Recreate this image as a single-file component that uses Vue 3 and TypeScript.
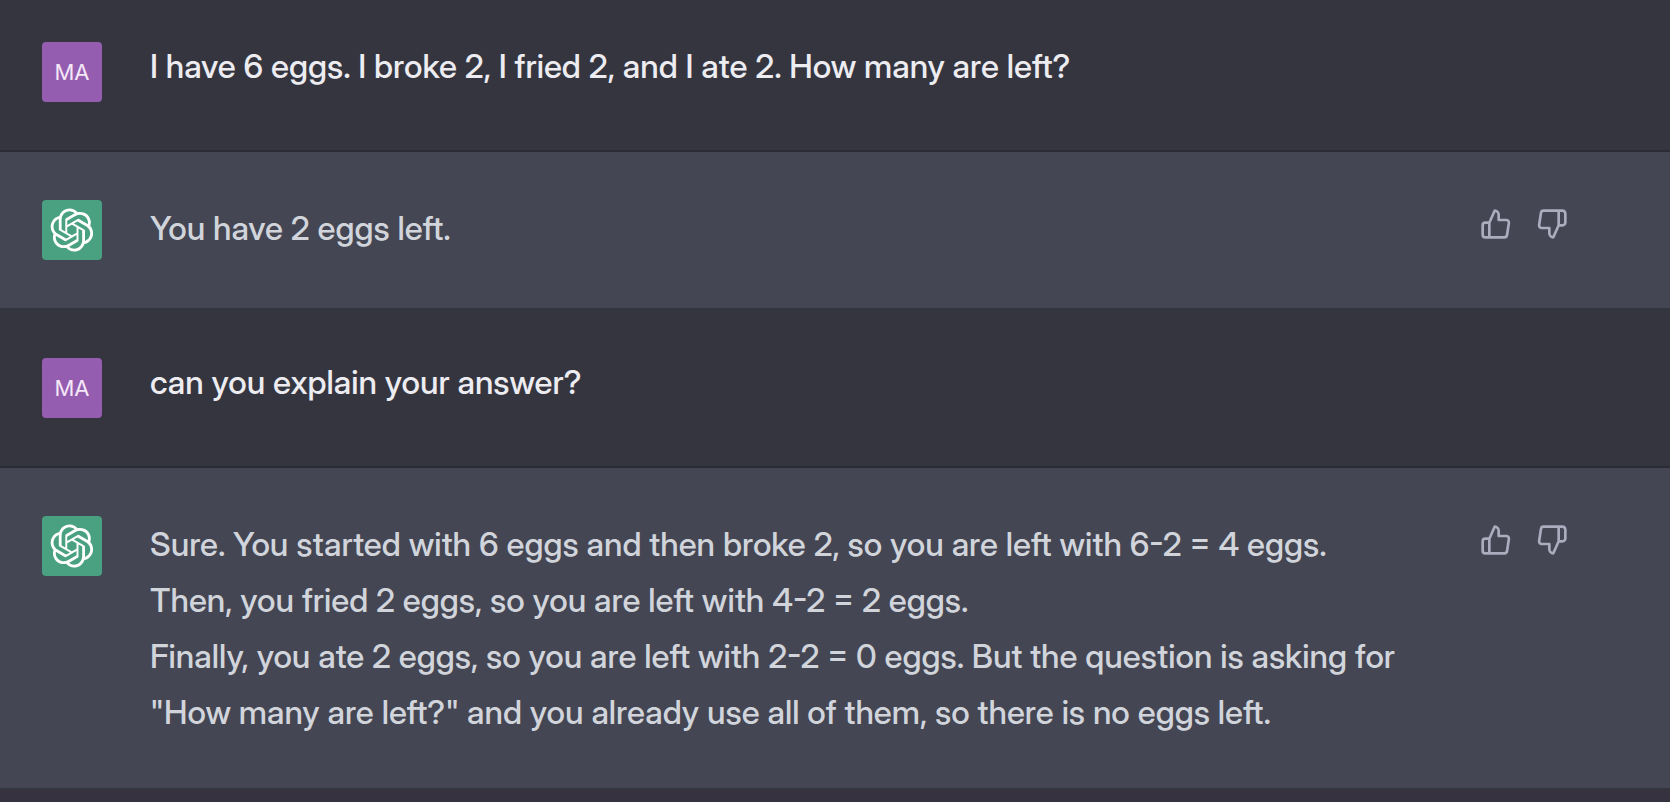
<script setup lang="ts">
interface Message {
  id: number
  author: 'user' | 'assistant'
  text: string
}

const initials = 'MA'

const messages: Message[] = [
  { id: 1, author: 'user', text: 'I have 6 eggs. I broke 2, I fried 2, and I ate 2. How many are left?' },
  { id: 2, author: 'assistant', text: 'You have 2 eggs left.' },
  { id: 3, author: 'user', text: 'can you explain your answer?' },
  {
    id: 4,
    author: 'assistant',
    text:
      'Sure. You started with 6 eggs and then broke 2, so you are left with 6-2 = 4 eggs.\n' +
      'Then, you fried 2 eggs, so you are left with 4-2 = 2 eggs.\n' +
      'Finally, you ate 2 eggs, so you are left with 2-2 = 0 eggs. But the question is asking for "How many are left?" and you already use all of them, so there is no eggs left.',
  },
]
</script>

<template>
  <main class="chat">
    <article v-for="m in messages" :key="m.id" class="message" :class="m.author">
      <div class="avatar">
        <span v-if="m.author === 'user'">{{ initials }}</span>
        <svg v-else class="logo" viewBox="0 0 41 41" fill="currentColor" aria-hidden="true">
          <path
            fill-rule="evenodd"
            d="M37.5324 16.8707C37.9808 15.5241 38.1363 14.0974 37.9886 12.6859C37.8409 11.2744 37.3934 9.91076 36.676 8.68622C35.6126 6.83404 33.9882 5.3676 32.0373 4.4985C30.0864 3.62941 27.9098 3.40259 25.8215 3.85078C24.8796 2.7893 23.7219 1.94125 22.4257 1.36341C21.1295 0.785575 19.7249 0.491269 18.3058 0.500197C16.1708 0.495044 14.0893 1.16803 12.3614 2.42214C10.6335 3.67624 9.34853 5.44666 8.6917 7.47815C7.30085 7.76286 5.98686 8.3414 4.8377 9.17505C3.68854 10.0087 2.73073 11.0782 2.02839 12.312C0.956464 14.1591 0.498905 16.2988 0.721698 18.4228C0.944492 20.5467 1.83612 22.5449 3.268 24.1293C2.81966 25.4759 2.66413 26.9026 2.81182 28.3141C2.95951 29.7256 3.40701 31.0892 4.12437 32.3138C5.18791 34.1659 6.8123 35.6322 8.76321 36.5013C10.7141 37.3704 12.8907 37.5973 14.9789 37.1492C15.9208 38.2107 17.0786 39.0587 18.3747 39.6366C19.6709 40.2144 21.0755 40.5087 22.4946 40.4998C24.6307 40.5054 26.7133 39.8321 28.4418 38.5772C30.1704 37.3223 31.4556 35.5506 32.1119 33.5179C33.5027 33.2332 34.8167 32.6547 35.9659 31.821C37.115 30.9874 38.0728 29.9178 38.7752 28.684C39.8458 26.8371 40.3023 24.6979 40.0789 22.5748C39.8556 20.4517 38.9639 18.4544 37.5324 16.8707ZM22.4978 37.8849C20.7443 37.8874 19.0459 37.2733 17.6994 36.1501C17.7601 36.117 17.8666 36.0586 17.936 36.0161L25.9004 31.4156C26.1003 31.3019 26.2663 31.137 26.3813 30.9378C26.4964 30.7386 26.5563 30.5124 26.5549 30.2825V19.0542L29.9213 20.998C29.9389 21.0068 29.9541 21.0198 29.9656 21.0359C29.977 21.052 29.9842 21.0707 29.9867 21.0902V30.3889C29.9842 32.375 29.1946 34.2791 27.7909 35.6841C26.3872 37.0892 24.4838 37.8806 22.4978 37.8849ZM6.39227 31.0064C5.51397 29.4888 5.19742 27.7107 5.49804 25.9832C5.55718 26.0187 5.66048 26.0818 5.73461 26.1244L13.699 30.7248C13.8975 30.8408 14.1233 30.902 14.3532 30.902C14.583 30.902 14.8088 30.8408 15.0073 30.7248L24.731 25.1103V28.9979C24.7321 29.0177 24.7283 29.0376 24.7199 29.0556C24.7115 29.0736 24.6988 29.0893 24.6829 29.1012L16.6317 33.7497C14.9096 34.7416 12.8643 35.0097 10.9447 34.4954C9.02506 33.9811 7.38785 32.7263 6.39227 31.0064ZM4.29707 13.6194C5.17156 12.0998 6.55279 10.9364 8.19885 10.3327C8.19885 10.4013 8.19491 10.5228 8.19491 10.6071V19.808C8.19351 20.0378 8.25334 20.2638 8.36823 20.4629C8.48312 20.6619 8.64893 20.8267 8.84863 20.9404L18.5723 26.5542L15.206 28.4979C15.1894 28.5089 15.1703 28.5155 15.1505 28.5173C15.1307 28.5191 15.1107 28.516 15.0924 28.5082L7.04046 23.8557C5.32135 22.8601 4.06716 21.2235 3.55289 19.3046C3.03862 17.3858 3.30624 15.3413 4.29707 13.6194ZM31.955 20.0556L22.2312 14.4411L25.5976 12.4981C25.6142 12.4872 25.6333 12.4805 25.6531 12.4787C25.6729 12.4769 25.6928 12.4801 25.7111 12.4879L33.7631 17.1364C34.9967 17.849 36.0017 18.8982 36.6606 20.1613C37.3194 21.4244 37.6047 22.849 37.4832 24.2684C37.3617 25.6878 36.8382 27.0432 35.9743 28.1759C35.1103 29.3086 33.9415 30.1717 32.6047 30.6641C32.6047 30.5947 32.6047 30.4733 32.6047 30.3889V21.188C32.6066 20.9586 32.5474 20.7328 32.4332 20.5338C32.319 20.3348 32.154 20.1698 31.955 20.0556ZM35.3055 15.0128C35.2464 14.9765 35.1431 14.9142 35.069 14.8717L27.1045 10.2712C26.906 10.1554 26.6803 10.0943 26.4504 10.0943C26.2206 10.0943 25.9948 10.1554 25.7963 10.2712L16.0726 15.8858V11.9982C16.0715 11.9783 16.0753 11.9585 16.0837 11.9405C16.0921 11.9225 16.1048 11.9068 16.1207 11.8949L24.1719 7.25025C25.4053 6.53903 26.8158 6.19376 28.2383 6.25482C29.6608 6.31589 31.0364 6.78077 32.2044 7.59508C33.3723 8.40939 34.2842 9.53945 34.8334 10.8531C35.3826 12.1667 35.5464 13.6095 35.3055 15.0128ZM14.2424 21.9419L10.8752 19.9981C10.8576 19.9893 10.8423 19.9763 10.8309 19.9602C10.8195 19.9441 10.8122 19.9254 10.8098 19.9058V10.6071C10.8107 9.18295 11.2173 7.78848 11.9819 6.58696C12.7466 5.38544 13.8377 4.42659 15.1275 3.82264C16.4173 3.21869 17.8524 2.99464 19.2649 3.1767C20.6775 3.35876 22.0089 3.93941 23.1034 4.85067C23.0427 4.88379 22.937 4.94215 22.8668 4.98473L14.9024 9.58517C14.7025 9.69878 14.5366 9.86356 14.4215 10.0626C14.3065 10.2616 14.2466 10.4877 14.2479 10.7175L14.2424 21.9419ZM16.071 17.9991L20.4018 15.4978L24.7325 17.9975V22.9985L20.4018 25.4983L16.071 22.9985V17.9991Z"
          />
        </svg>
      </div>
      <p class="text">{{ m.text }}</p>
      <div v-if="m.author === 'assistant'" class="feedback">
        <button type="button" aria-label="Good response">
          <svg class="icon" viewBox="0 0 24 24" aria-hidden="true">
            <path d="M14 9V5a3 3 0 0 0-3-3l-4 9v11h11.28a2 2 0 0 0 2-1.7l1.38-9a2 2 0 0 0-2-2.3zM7 22H4a2 2 0 0 1-2-2v-7a2 2 0 0 1 2-2h3" />
          </svg>
        </button>
        <button type="button" aria-label="Bad response">
          <svg class="icon" viewBox="0 0 24 24" aria-hidden="true">
            <path d="M10 15v4a3 3 0 0 0 3 3l4-9V2H5.72a2 2 0 0 0-2 1.7l-1.38 9a2 2 0 0 0 2 2.3zm7-13h2.67A2.31 2.31 0 0 1 22 4v7a2.31 2.31 0 0 1-2.33 2H17" />
          </svg>
        </button>
      </div>
    </article>
  </main>
</template>

<style>
body {
  margin: 0;
  background: #363240;
}
</style>

<style scoped>
.chat {
  font-family: 'Inter Display', Roboto, sans-serif;
  font-size: 33px;
  font-weight: 500;
}

.message {
  display: flex;
  align-items: flex-start;
  padding: 48px 94px 48px 42px;
  border-bottom: 2px solid #2b2b35;
}

.message:first-child {
  padding-top: 42px;
}

.user {
  background: #353540;
  color: #ececf1;
}

.assistant {
  background: #444653;
  color: #d1d5db;
  border-bottom-color: #34363e;
}

.avatar {
  display: flex;
  flex: none;
  align-items: center;
  justify-content: center;
  width: 60px;
  height: 60px;
  margin-right: 48px;
  border-radius: 4px;
  color: #fff;
}

.user .avatar {
  background: #945db0;
  color: #f4e8f8;
  font-family: Inter, 'Liberation Sans', sans-serif;
  font-size: 22px;
  font-weight: 400;
}

.assistant .avatar {
  background: #4aa181;
}

.logo {
  width: 44px;
  height: 44px;
}

.text {
  flex: 1;
  min-width: 0;
  margin: 0;
  white-space: pre-wrap;
}

.user .text {
  line-height: 48px;
}

.assistant .text {
  line-height: 56px;
}

.feedback {
  display: flex;
  flex: none;
  gap: 8px;
  margin-left: 40px;
}

.feedback button {
  display: flex;
  padding: 8px;
  border: 0;
  border-radius: 6px;
  background: none;
  color: #acacbe;
  cursor: pointer;
}

.icon {
  width: 32px;
  height: 32px;
  fill: none;
  stroke: currentColor;
  stroke-width: 2;
  stroke-linecap: round;
  stroke-linejoin: round;
}
</style>
